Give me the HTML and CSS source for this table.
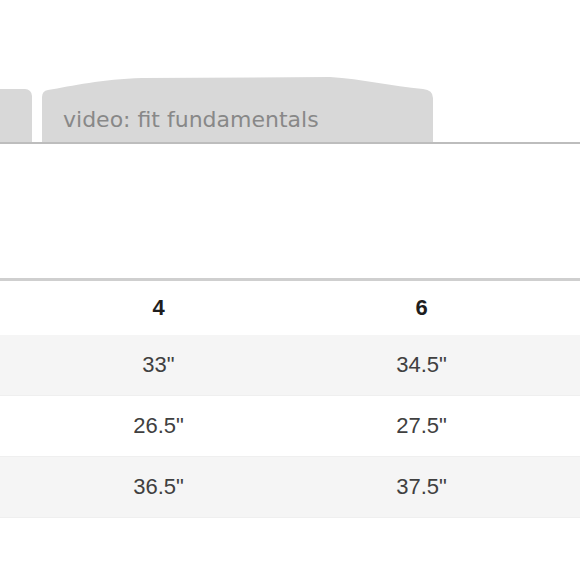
FILE: index.html
```html
<!DOCTYPE html>
<html>
<head>
<meta charset="utf-8">
<link rel="stylesheet" href="styles.css">
</head>
<body>
<div class="tabs">
  <div class="tab tab-prev"></div>
  <div class="tab tab-video"><span class="tab-label">video: fit fundamentals</span></div>
</div>
<div class="tab-rule"></div>
<div class="spacer"></div>
<div class="size-table">
  <div class="row head">
    <div class="cell"></div><div class="cell">4</div><div class="cell">6</div><div class="cell"></div>
  </div>
  <div class="row alt">
    <div class="cell"></div><div class="cell">33"</div><div class="cell">34.5"</div><div class="cell"></div>
  </div>
  <div class="row">
    <div class="cell"></div><div class="cell">26.5"</div><div class="cell">27.5"</div><div class="cell"></div>
  </div>
  <div class="row alt">
    <div class="cell"></div><div class="cell">36.5"</div><div class="cell">37.5"</div><div class="cell"></div>
  </div>
</div>
</body>
</html>
```

FILE: styles.css
```css
html, body {
  margin: 0;
  padding: 0;
  background: #ffffff;
  width: 580px;
  height: 580px;
  overflow: hidden;
}

.tabs {
  display: flex;
  align-items: flex-end;
  gap: 10px;
  padding-top: 76px;
  height: 66px;
}

.tab {
  background: #d8d8d8;
  box-sizing: border-box;
}

.tab-prev {
  width: 32px;
  height: 53px;
  border-top-right-radius: 7px;
}

.tab-video {
  width: 391px;
  height: 66px;
  padding: 33px 0 0 21px;
  clip-path: path("M0,66 L0,21 Q0,15 6,14 C30,10 60,3 100,2 L288,1 C320,3 350,10 381,13 Q391,14 391,22 L391,66 Z");
}

.tab-label {
  font-family: "DejaVu Sans", Verdana, sans-serif;
  font-size: 22px;
  line-height: 22px;
  color: #888888;
  white-space: nowrap;
}

.tab-rule {
  height: 2px;
  background: #bdbdbd;
}

.spacer {
  height: 134px;
}

.size-table {
  border-top: 3px solid #cfcfcf;
  font-family: "Liberation Sans", Arial, sans-serif;
}

.row {
  display: grid;
  grid-template-columns: 27px 263px 263px 1fr;
  height: 61px;
  align-items: center;
  font-size: 22px;
  color: #404040;
  border-bottom: 1px solid #efefef;
  box-sizing: border-box;
}

.row.head {
  height: 54px;
  font-weight: bold;
  color: #1e1e1e;
  border-bottom: none;
}

.row.alt {
  background: #f5f5f5;
}

.cell {
  text-align: center;
}
```
